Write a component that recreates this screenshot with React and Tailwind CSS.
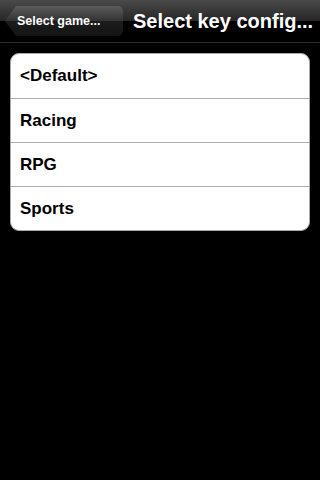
import React from "react";

const rows = ["<Default>", "Racing", "RPG", "Sports"];

function NavBar() {
  return (
    <div className="flex h-[43px] items-center border-b border-[#2e2e2e] bg-[linear-gradient(#4a4a4a,#262626_50%,#000_50%,#000)] px-[5px]">
      <button className="flex h-[30px] w-[118px] items-center rounded-r-[5px] bg-[linear-gradient(#5c5c5c,#333_50%,#1c1c1c_50%,#141414)] pl-[12px] [clip-path:polygon(11px_0,100%_0,100%_100%,11px_100%,0_50%)]">
        <span className="text-[12.5px] font-bold text-white">Select game...</span>
      </button>
      <h1 className="ml-[10px] truncate text-[20px] font-bold text-white">
        Select key config...
      </h1>
    </div>
  );
}

function App() {
  return (
    <div className="h-[480px] w-[320px] bg-black font-['Liberation_Sans',Arial,sans-serif]">
      <NavBar />
      <ul className="mx-[10px] mt-[10px] overflow-hidden rounded-[9px] border border-[#a8a8a8] bg-white">
        {rows.map((label, i) => (
          <li
            key={i}
            className={
              "flex h-[44px] items-center px-[9px] text-[17px] font-bold text-black " +
              (i > 0 ? "border-t border-[#ababab]" : "")
            }
          >
            {label}
          </li>
        ))}
      </ul>
    </div>
  );
}

export default App;
